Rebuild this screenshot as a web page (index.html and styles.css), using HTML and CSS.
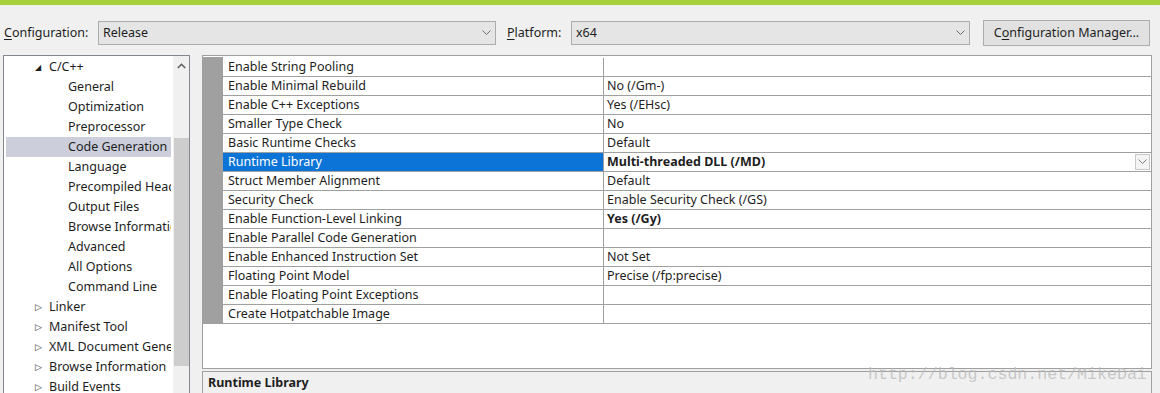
FILE: index.html
```html
<!DOCTYPE html>
<html>
<head>
<meta charset="utf-8">
<link rel="stylesheet" href="styles.css">
</head>
<body>
<div class="topbar"></div>
<div class="toolbar">
  <span class="label"><u>C</u>onfiguration:</span>
  <div class="combo combo-config"><span>Release</span><svg class="chev" width="9" height="6" viewBox="0 0 9 6"><path d="M0.5 0.5 L4.5 4.5 L8.5 0.5" fill="none" stroke="#707070" stroke-width="1"/></svg></div>
  <span class="label label-plat"><u>P</u>latform:</span>
  <div class="combo combo-plat"><span>x64</span><svg class="chev" width="9" height="6" viewBox="0 0 9 6"><path d="M0.5 0.5 L4.5 4.5 L8.5 0.5" fill="none" stroke="#707070" stroke-width="1"/></svg></div>
  <button class="btn">C<u>o</u>nfiguration Manager...</button>
</div>
<div class="main">
  <div class="tree">
    <div class="tree-list">
      <div class="node lvl1"><span class="exp">&#9698;</span>C/C++</div>
      <div class="node lvl2">General</div>
      <div class="node lvl2">Optimization</div>
      <div class="node lvl2">Preprocessor</div>
      <div class="node lvl2 sel">Code Generation</div>
      <div class="node lvl2">Language</div>
      <div class="node lvl2">Precompiled Headers</div>
      <div class="node lvl2">Output Files</div>
      <div class="node lvl2">Browse Information</div>
      <div class="node lvl2">Advanced</div>
      <div class="node lvl2">All Options</div>
      <div class="node lvl2">Command Line</div>
      <div class="node lvl1"><span class="exp col">&#9655;</span>Linker</div>
      <div class="node lvl1"><span class="exp col">&#9655;</span>Manifest Tool</div>
      <div class="node lvl1"><span class="exp col">&#9655;</span>XML Document Generator</div>
      <div class="node lvl1"><span class="exp col">&#9655;</span>Browse Information</div>
      <div class="node lvl1"><span class="exp col">&#9655;</span>Build Events</div>
    </div>
    <div class="vscroll">
      <svg class="uparrow" width="9" height="6" viewBox="0 0 9 6"><path d="M0.8 5 L4.5 1.3 L8.2 5" fill="none" stroke="#606060" stroke-width="1.6"/></svg>
      <div class="thumb"></div>
    </div>
  </div>
  <div class="right">
    <div class="grid">
      <div class="gutter"></div>
      <div class="rows">
        <div class="row"><div class="name">Enable String Pooling</div><div class="val"></div></div>
        <div class="row"><div class="name">Enable Minimal Rebuild</div><div class="val">No (/Gm-)</div></div>
        <div class="row"><div class="name">Enable C++ Exceptions</div><div class="val">Yes (/EHsc)</div></div>
        <div class="row"><div class="name">Smaller Type Check</div><div class="val">No</div></div>
        <div class="row"><div class="name">Basic Runtime Checks</div><div class="val">Default</div></div>
        <div class="row selrow"><div class="name">Runtime Library</div><div class="val bold">Multi-threaded DLL (/MD)<span class="dd"><svg width="9" height="6" viewBox="0 0 9 6"><path d="M0.5 0.5 L4.5 4.5 L8.5 0.5" fill="none" stroke="#808080" stroke-width="1"/></svg></span></div></div>
        <div class="row"><div class="name">Struct Member Alignment</div><div class="val">Default</div></div>
        <div class="row"><div class="name">Security Check</div><div class="val">Enable Security Check (/GS)</div></div>
        <div class="row"><div class="name">Enable Function-Level Linking</div><div class="val bold">Yes (/Gy)</div></div>
        <div class="row"><div class="name">Enable Parallel Code Generation</div><div class="val"></div></div>
        <div class="row"><div class="name">Enable Enhanced Instruction Set</div><div class="val">Not Set</div></div>
        <div class="row"><div class="name">Floating Point Model</div><div class="val">Precise (/fp:precise)</div></div>
        <div class="row"><div class="name">Enable Floating Point Exceptions</div><div class="val"></div></div>
        <div class="row"><div class="name">Create Hotpatchable Image</div><div class="val"></div></div>
      </div>
    </div>
    <div class="desc">Runtime Library</div>
  </div>
</div>
<div class="watermark">http://blog.csdn.net/MikeDai</div>
</body>
</html>
```

FILE: styles.css
```css
html, body {
  margin: 0;
  padding: 0;
  width: 1160px;
  height: 393px;
  overflow: hidden;
  background: #f0f0f0;
  font-family: "Noto Sans", "Open Sans", sans-serif;
  font-size: 12.5px;
  color: #1e1e1e;
  position: relative;
}
.topbar {
  height: 5px;
  background: #a6d13c;
}
.toolbar {
  display: flex;
  align-items: center;
  height: 43px;
  padding: 0 0 0 4px;
  box-sizing: border-box;
  margin-top: 6px;
}
.toolbar u { text-decoration: underline; text-underline-offset: 2px; }
.label { width: 94px; flex: none; }
.label-plat { width: 64px; margin-left: 11px; }
.combo {
  height: 24px;
  box-sizing: border-box;
  border: 1px solid #acacac;
  background: #e5e5e5;
  display: flex;
  align-items: center;
  justify-content: space-between;
  padding: 0 4px 0 4px;
  flex: none;
}
.combo-config { width: 398px; }
.combo-plat { width: 399px; }
.chev { margin-top: 1px; }
.btn {
  margin-left: 13px;
  width: 167px;
  height: 26px;
  border: 1px solid #adadad;
  background: #e1e1e1;
  font: inherit;
  color: #1e1e1e;
  padding: 0;
}
.main {
  display: flex;
  margin-top: 1px;
  height: 338px;
}
.tree {
  margin-left: 3px;
  width: 187px;
  flex: none;
  background: #fff;
  border: 1px solid #828790;
  border-bottom: none;
  box-sizing: border-box;
  display: flex;
  overflow: hidden;
}
.tree-list {
  width: 165px;
  flex: none;
  overflow: hidden;
  padding-top: 1px;
  margin-left: 2px;
}
.node {
  height: 20px;
  line-height: 20px;
  white-space: nowrap;
  overflow: hidden;
}
.lvl1 { padding-left: 29px; }
.lvl2 { padding-left: 62px; }
.node.sel { background: #cccedb; }
.exp {
  display: inline-block;
  width: 14px;
  font-size: 8px;
  color: #1e1e1e;
  vertical-align: top;
}
.exp.col { color: #333; font-size: 9px; }
.vscroll {
  width: 17px;
  flex: none;
  background: #f0f0f0;
  margin-left: 2px;
  display: flex;
  flex-direction: column;
  align-items: center;
}
.uparrow { margin-top: 7px; }
.thumb {
  width: 15px;
  margin-top: 69px;
  height: 228px;
  background: #cdcdcd;
}
.right {
  margin-left: 12px;
  width: 950px;
  flex: none;
  display: flex;
  flex-direction: column;
}
.grid {
  height: 314px;
  border: 1px solid #a0a0a0;
  box-sizing: border-box;
  background: #fff;
  display: flex;
  align-items: flex-start;
}
.gutter {
  width: 20px;
  height: 267px;
  background: #a0a0a0;
  flex: none;
  margin-top: 1px;
}
.rows {
  flex: 1;
  margin-top: 2px;
}
.row {
  display: flex;
  height: 19px;
  border-bottom: 1px solid #a0a0a0;
  box-sizing: border-box;
}
.name {
  width: 375px;
  flex: none;
  padding-left: 5px;
  line-height: 18px;
  border-right: 1px solid #a0a0a0;
  white-space: nowrap;
}
.val {
  flex: 1;
  padding-left: 3px;
  line-height: 18px;
  display: flex;
  justify-content: space-between;
  white-space: nowrap;
}
.bold { font-weight: bold; }
.selrow .name { background: #0c74d6; color: #fff; }
.dd {
  width: 15px;
  height: 16px;
  margin: 1px 1px 0 0;
  border: 1px solid #c8c8c8;
  box-sizing: border-box;
  display: flex;
  align-items: center;
  justify-content: center;
  background: #f4f4f4;
}
.desc {
  margin-top: 2px;
  flex: 1;
  border: 1px solid #a0a0a0;
  border-bottom: none;
  background: #f0f0f0;
  font-weight: bold;
  padding: 2px 0 0 5px;
}
.watermark {
  position: absolute;
  left: 868px;
  top: 365px;
  font-family: "Liberation Mono", monospace;
  font-size: 16.6px;
  color: rgba(185, 185, 185, 0.75);
}
```
